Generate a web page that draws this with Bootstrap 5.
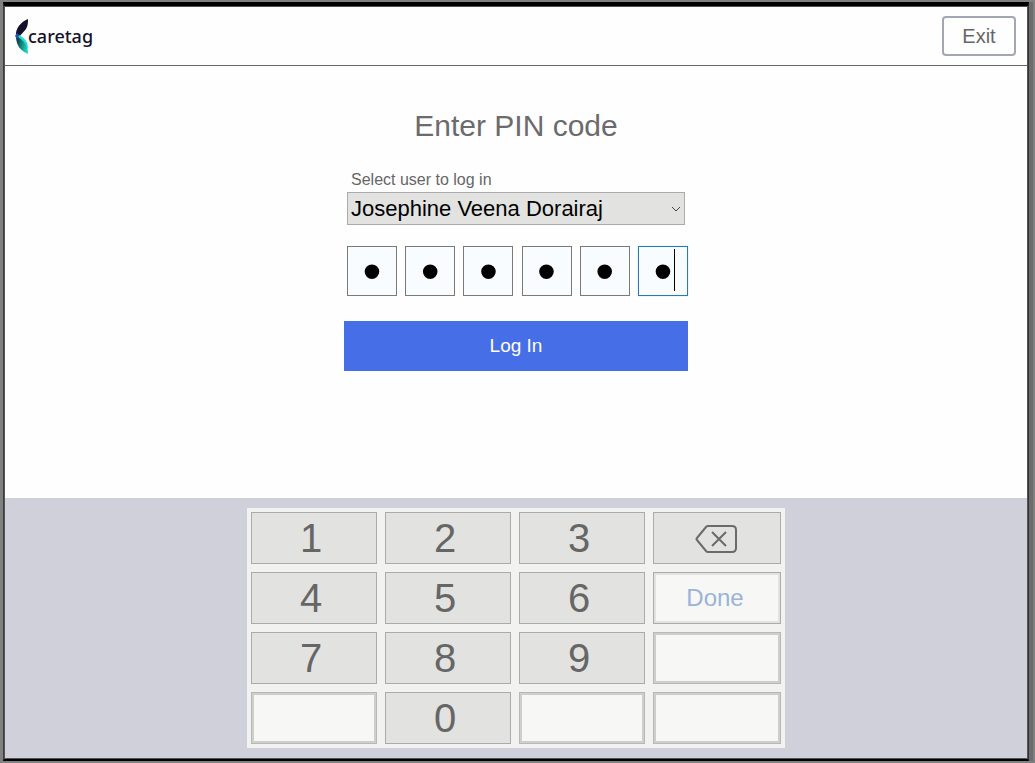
<!DOCTYPE html>
<html lang="en">
<head>
<meta charset="utf-8">
<meta name="viewport" content="width=device-width, initial-scale=1">
<title>Caretag – Enter PIN code</title>
<link rel="stylesheet" href="https://cdn.jsdelivr.net/npm/bootstrap@5.3.0/dist/css/bootstrap.min.css">
<style>
  body { background: #808080; font-family: "Liberation Sans", Arial, sans-serif; color: #666; }
  .window-shadow { padding: 2px 6px 2px 3px; }
  .window-frame { border: solid #000; border-width: 4px 1px 2px 1px; border-left-color: #3c3c3c; border-right-color: #333; box-shadow: 4px 0 0 #6c6c6c; }
  .screen { background: #fefefe; border: 1px solid #555; }
  .topbar { height: 59px; padding: 0 11px 0 10px; border-bottom: 1px solid #666; }
  .brand-name { margin-left: -1px; font: 500 18px/24px "Noto Sans", sans-serif; color: #14122b; }
  .btn-exit { width: 74px; height: 40px; border: 2px solid #a3a6b4; border-radius: 4px; color: #666; font-size: 20px; line-height: 24px; padding: 0; }
  .pin-main { padding-top: 42px; }
  .pin-title { font-size: 30px; line-height: 36px; color: #6b6b6b; font-weight: 400; }
  .pin-form { width: 344px; max-width: 100%; }
  .pin-fields { padding-left: 3px; }
  .user-label { font-size: 16px; line-height: 24px; padding-left: 4px; color: #666; }
  .user-select { width: 338px; max-width: 100%; height: 33px; appearance: none; background: #e2e2e0; border: 1px solid #ababab; border-radius: 0; padding: 0 24px 0 3px; font-size: 22px; line-height: 30px; color: #000; }
  .select-arrow { right: 7px; top: 13px; pointer-events: none; }
  .pin-row { margin-top: 21px; margin-bottom: 25px; }
  .pin-box { width: 50px; height: 50px; border: 1px solid #7a7a7a; border-radius: 0; background: #f8fcff; text-align: center; padding: 0; color: #000; font-size: 54px; line-height: 48px; outline: 0; }
  .pin-box.is-current { border-color: #2a7ab0; box-shadow: 0 0 1px #7fe0f5; }
  .caret { left: 36px; top: 3px; width: 1px; height: 42px; background: #000; }
  .btn-login { height: 50px; border: 0; border-radius: 0; background: #466ee6; color: #fff; font-size: 19px; }
  .keyboard { background: #d0d0da; padding: 10px 0; }
  .keypad { display: grid; grid-template-columns: 126fr 126fr 126fr 128fr; gap: 8px; padding: 4px; width: 538px; max-width: 100%; background: #f2f2f0; }
  .key { height: 52px; border: 1px solid #ababab; border-radius: 0; background: #e2e2e0; color: #666; font-size: 40px; line-height: 48px; padding: 0 6px 0 0; }
  .key-wide { padding: 2px 2px 0 0; }
  .key-done { background: #f7f7f5; box-shadow: inset 0 0 0 2px #e2e2e0; color: #9bb3d9; font-size: 24px; padding: 0 4px 0 0; }
  .key-blank { background: #f7f7f5; border-color: #b8b8b6; box-shadow: inset 0 0 0 2px #cececc; }
</style>
</head>
<body>
<div class="window-shadow min-vh-100 d-flex">
  <div class="window-frame flex-grow-1 d-flex">
    <div class="screen flex-grow-1 d-flex flex-column">
      <header class="topbar d-flex align-items-center justify-content-between">
        <a href="#" class="d-flex align-items-center text-decoration-none" aria-label="caretag">
          <svg width="14" height="36" viewBox="0 0 14 36" aria-hidden="true">
            <defs>
              <linearGradient id="leaf" x1="0" y1="0.3" x2="1" y2="0.7">
                <stop offset="0" stop-color="#0d2f45"/><stop offset="0.5" stop-color="#128a85"/><stop offset="1" stop-color="#1fe0c4"/>
              </linearGradient>
            </defs>
            <path d="M13 1C6 4 0 10 1 19L4 19C6 16 9 14 11 11C13 8 13 4 13 1Z" fill="#14122b"/>
            <path d="M3 17C9 20 13 25 13 36C6 33 1 28 1 18Z" fill="url(#leaf)"/>
            <path d="M4 17C10 20 13 24 13 31C11 26 8 22 3 19Z" fill="#25e0c8"/>
            <path d="M0 18L2 15L4 17L2 21Z" fill="#2450b8"/>
          </svg>
          <span class="brand-name">caretag</span>
        </a>
        <button type="button" class="btn btn-exit">Exit</button>
      </header>
      <main class="pin-main flex-grow-1 d-flex flex-column align-items-center px-2">
        <h1 class="pin-title mb-0">Enter PIN code</h1>
        <form class="pin-form mt-4">
          <div class="pin-fields">
            <label for="user" class="user-label d-block">Select user to log in</label>
            <div class="position-relative">
              <select id="user" class="user-select d-block"><option>Josephine Veena Dorairaj</option></select>
              <svg class="select-arrow position-absolute" width="10" height="8" viewBox="0 0 10 8" fill="none" stroke="#444" aria-hidden="true"><path d="M1 2L5 6L9 2"/></svg>
            </div>
            <div class="pin-row d-flex justify-content-between">
              <input class="pin-box" type="password" maxlength="1" value="1" aria-label="PIN digit 1">
              <input class="pin-box" type="password" maxlength="1" value="1" aria-label="PIN digit 2">
              <input class="pin-box" type="password" maxlength="1" value="1" aria-label="PIN digit 3">
              <input class="pin-box" type="password" maxlength="1" value="1" aria-label="PIN digit 4">
              <input class="pin-box" type="password" maxlength="1" value="1" aria-label="PIN digit 5">
              <div class="position-relative">
                <input class="pin-box is-current d-block" type="password" maxlength="1" value="1" aria-label="PIN digit 6">
                <span class="caret position-absolute"></span>
              </div>
            </div>
          </div>
          <button type="button" class="btn btn-login w-100">Log In</button>
        </form>
      </main>
      <section class="keyboard d-flex justify-content-center" aria-label="Keypad">
        <div class="keypad">
          <button type="button" class="btn key">1</button>
          <button type="button" class="btn key">2</button>
          <button type="button" class="btn key">3</button>
          <button type="button" class="btn key key-wide d-flex align-items-center justify-content-center" aria-label="Backspace">
            <svg width="42" height="28" viewBox="0 0 42 28" fill="none" stroke="#6b6b6b" stroke-width="2" aria-hidden="true"><path d="M13 1H37Q41 1 41 5V23Q41 27 37 27H13Q12 27 11 26L2 15Q1 14 2 13L11 2Q12 1 13 1ZM17 7L31 21M31 7L17 21"/></svg>
          </button>
          <button type="button" class="btn key">4</button>
          <button type="button" class="btn key">5</button>
          <button type="button" class="btn key">6</button>
          <button type="button" class="btn key key-done">Done</button>
          <button type="button" class="btn key">7</button>
          <button type="button" class="btn key">8</button>
          <button type="button" class="btn key">9</button>
          <button type="button" class="btn key key-blank" aria-label="Unused key"></button>
          <button type="button" class="btn key key-blank" aria-label="Unused key"></button>
          <button type="button" class="btn key">0</button>
          <button type="button" class="btn key key-blank" aria-label="Unused key"></button>
          <button type="button" class="btn key key-blank" aria-label="Unused key"></button>
        </div>
      </section>
    </div>
  </div>
</div>
<script src="https://cdn.jsdelivr.net/npm/bootstrap@5.3.0/dist/js/bootstrap.bundle.min.js"></script>
</body>
</html>
